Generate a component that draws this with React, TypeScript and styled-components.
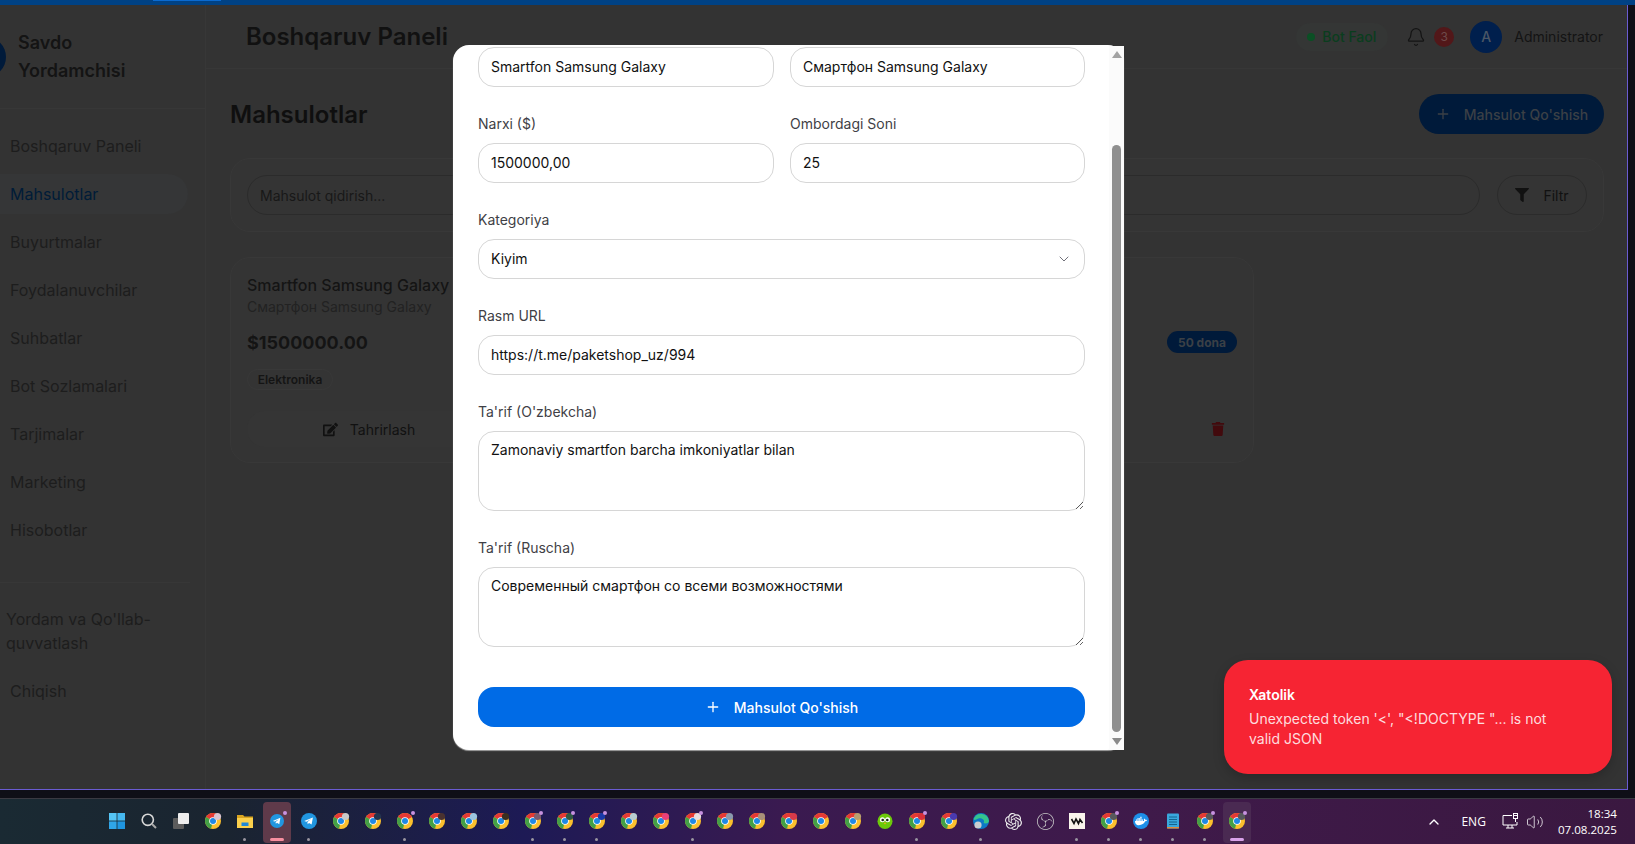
import type { ReactNode } from 'react';
import styled, { createGlobalStyle } from 'styled-components';
import { Bell, ChevronDown, ChevronUp, Plus, Volume2 } from 'lucide-react';
import { FaDocker, FaEdit, FaFilter, FaTrash } from 'react-icons/fa';
import { SiObsstudio, SiOpenai } from 'react-icons/si';

const GlobalStyle = createGlobalStyle`
  html, body {
    margin: 0;
    padding: 0;
    height: 100%;
    overflow: hidden;
    background: #0f0f17;
  }
  * {
    box-sizing: border-box;
  }
`;

const Screen = styled.div`
  width: 1635px;
  height: 844px;
  display: flex;
  flex-direction: column;
  font-family: 'Inter', 'Liberation Sans', sans-serif;
  overflow: hidden;
`;

const TopLine = styled.div`
  height: 5px;
  flex: none;
  background: #004285;
`;

const TopProgress = styled.div`
  width: 68px;
  height: 1px;
  margin-left: 153px;
  background: #0a6ad0;
`;

const AppWindow = styled.div`
  position: relative;
  width: 1628px;
  height: 785px;
  flex: none;
  display: flex;
  background: #333333;
  border-right: 1px solid #6a5bd2;
  border-bottom: 1px solid #6a5bd2;
`;

const Strip = styled.div`
  height: 8px;
  flex: none;
  background: #0f0f17;
`;

/* sidebar */

const Sidebar = styled.aside`
  width: 206px;
  flex: none;
  border-right: 1px solid #373737;
  overflow: hidden;
`;

const Brand = styled.div`
  height: 104px;
  display: flex;
  align-items: center;
  gap: 12px;
  margin-left: -34px;
  padding-top: 1px;
  border-bottom: 1px solid #373737;
`;

const BrandDot = styled.div`
  width: 40px;
  height: 40px;
  flex: none;
  border-radius: 50%;
  background: #001a3a;
`;

const BrandName = styled.div`
  width: 130px;
  font-size: 18px;
  font-weight: 600;
  line-height: 28px;
  color: #141414;
`;

const NavList = styled.nav`
  display: flex;
  flex-direction: column;
  gap: 8px;
  padding: 17px 17px 32px 0;
`;

const NavItem = styled.div<{ $active?: boolean }>`
  height: 40px;
  display: flex;
  align-items: center;
  padding-left: 10px;
  font-size: 16px;
  color: ${props => (props.$active ? '#001c38' : '#1d1d1d')};
  background: ${props => (props.$active ? '#353637' : 'transparent')};
  border-radius: 0 20px 20px 0;
`;

const NavFooter = styled.div`
  margin-right: 15px;
  padding-top: 16px;
  border-top: 1px solid #373737;
  display: flex;
  flex-direction: column;
  gap: 12px;
`;

const HelpItem = styled.div`
  padding: 8px 0 4px 6px;
  font-size: 16px;
  line-height: 24px;
  color: #1d1d1d;
`;

/* main */

const Main = styled.main`
  flex: 1;
  min-width: 0;
  display: flex;
  flex-direction: column;
`;

const Header = styled.header`
  height: 64px;
  flex: none;
  display: flex;
  align-items: center;
  justify-content: space-between;
  padding: 0 23px 0 40px;
  border-bottom: 1px solid #373737;
`;

const HeaderTitle = styled.h1`
  margin: 0;
  font-size: 24px;
  font-weight: 600;
  color: #111111;
`;

const HeaderRight = styled.div`
  display: flex;
  align-items: center;
`;

const BotStatus = styled.div`
  width: 92px;
  height: 28px;
  display: flex;
  align-items: center;
  gap: 7px;
  padding-left: 11px;
  margin-right: 18px;
  border-radius: 14px;
  background: #343635;
  font-size: 14px;
  font-weight: 500;
  color: #0a3d1e;
`;

const StatusDot = styled.span`
  width: 8px;
  height: 8px;
  border-radius: 50%;
  background: #0a4f24;
`;

const BellWrap = styled.div`
  display: flex;
  color: #141414;
  margin-right: 8px;
`;

const CountBadge = styled.div`
  width: 20px;
  height: 20px;
  display: flex;
  align-items: center;
  justify-content: center;
  border-radius: 50%;
  background: #521719;
  font-size: 12px;
  color: #6e4a4a;
  margin-right: 16px;
`;

const Avatar = styled.div`
  width: 32px;
  height: 32px;
  display: flex;
  align-items: center;
  justify-content: center;
  border-radius: 50%;
  background: #001f4d;
  font-size: 14px;
  font-weight: 500;
  color: #4a5666;
  margin-right: 12px;
`;

const UserName = styled.div`
  font-size: 14px;
  color: #141414;
  margin-right: 1px;
`;

const Content = styled.div`
  flex: 1;
  padding: 25px 23px 0 24px;
`;

const TitleRow = styled.div`
  display: flex;
  align-items: center;
  justify-content: space-between;
  margin-bottom: 24px;
`;

const PageTitle = styled.h2`
  margin: 0;
  font-size: 24px;
  font-weight: 600;
  color: #0f0f0f;
`;

const AddButton = styled.div`
  width: 185px;
  height: 40px;
  display: flex;
  align-items: center;
  justify-content: center;
  gap: 13px;
  border-radius: 20px;
  background: #001a3a;
  font-size: 14px;
  font-weight: 500;
  color: #3b4046;
`;

const SearchPanel = styled.div`
  height: 74px;
  display: flex;
  align-items: center;
  gap: 17px;
  padding: 0 16px 0 16px;
  border: 1px solid #383838;
  border-radius: 20px;
  background: #343434;
  margin-bottom: 25px;
`;

const SearchBox = styled.div`
  flex: 1;
  height: 40px;
  display: flex;
  align-items: center;
  padding-left: 12px;
  border: 1px solid #2b2b2b;
  border-radius: 20px;
  font-size: 14px;
  color: #181818;
`;

const FilterButton = styled.div`
  width: 90px;
  height: 40px;
  display: flex;
  align-items: center;
  justify-content: center;
  gap: 14px;
  border: 1px solid #2b2b2b;
  border-radius: 20px;
  font-size: 14px;
  color: #111111;
`;

const ProductCard = styled.div`
  width: 1024px;
  height: 206px;
  padding: 15px 16px;
  border: 1px solid #383838;
  border-radius: 20px;
  background: #343434;
`;

const ProductName = styled.div`
  font-size: 16px;
  font-weight: 500;
  line-height: 24px;
  color: #141414;
`;

const ProductSub = styled.div`
  font-size: 14px;
  line-height: 20px;
  color: #222222;
  margin-bottom: 13px;
`;

const PriceRow = styled.div`
  display: flex;
  align-items: center;
  justify-content: space-between;
  height: 24px;
  margin-bottom: 15px;
`;

const Price = styled.div`
  font-size: 18px;
  font-weight: 700;
  color: #141414;
`;

const StockBadge = styled.div`
  width: 70px;
  height: 22px;
  display: flex;
  align-items: center;
  justify-content: center;
  border-radius: 11px;
  background: #001a3a;
  font-size: 12px;
  font-weight: 700;
  color: #3b4046;
`;

const CategoryChip = styled.div`
  width: 86px;
  height: 21px;
  display: flex;
  align-items: center;
  justify-content: center;
  border: 1px solid #383838;
  border-radius: 11px;
  font-size: 12px;
  font-weight: 600;
  color: #141414;
  margin-bottom: 21px;
`;

const ActionRow = styled.div`
  display: flex;
  justify-content: space-between;
`;

const EditButton = styled.div`
  width: 244px;
  height: 36px;
  display: flex;
  align-items: center;
  justify-content: center;
  gap: 12px;
  border-radius: 18px;
  background: #353535;
  font-size: 14px;
  color: #111111;
`;

const DeleteButton = styled.div`
  width: 38px;
  height: 36px;
  display: flex;
  align-items: center;
  justify-content: center;
  color: #420a0d;
`;

/* modal */

const Modal = styled.div`
  position: absolute;
  top: 40px;
  left: 453px;
  width: 671px;
  height: 705px;
  padding: 2px 39px 0 25px;
  background: #ffffff;
  border-radius: 16px;
  box-shadow: 0 1px 1px #a0a0a0;
`;

const ScrollRail = styled.div`
  position: absolute;
  top: 1px;
  right: 0;
  bottom: 0;
  width: 15px;
  background: #fbfbfb;
  display: flex;
  flex-direction: column;
  align-items: center;
  padding: 5px 0 5px;
`;

const RailArrow = styled.div<{ $down?: boolean }>`
  width: 0;
  height: 0;
  flex: none;
  border-left: 5px solid transparent;
  border-right: 5px solid transparent;
  border-bottom: ${props => (props.$down ? 'none' : '7px solid #a3a3a3')};
  border-top: ${props => (props.$down ? '7px solid #8a8a8a' : 'none')};
`;

const RailThumb = styled.div`
  width: 9px;
  flex: 1;
  margin: 87px 0 6px;
  border-radius: 5px;
  background: #8f8f8f;
`;

const FormStack = styled.form`
  display: flex;
  flex-direction: column;
  gap: 27px;
`;

const TwoColumns = styled.div`
  display: grid;
  grid-template-columns: 296px 295px;
  gap: 16px;
`;

const Field = styled.div`
  display: flex;
  flex-direction: column;
  min-width: 0;
`;

const FieldLabel = styled.label`
  font-size: 14px;
  line-height: 20px;
  color: #3f3f46;
  margin-bottom: 9px;
`;

const TextInput = styled.input`
  width: 100%;
  height: 40px;
  padding: 0 12px 2px;
  border: 1px solid #d6d6d6;
  border-radius: 16px;
  outline: none;
  background: #ffffff;
  font-family: inherit;
  font-size: 14px;
  color: #111111;
`;

const SelectWrap = styled.div`
  position: relative;
`;

const SelectInput = styled.select`
  width: 100%;
  height: 40px;
  padding: 0 12px 2px;
  border: 1px solid #d6d6d6;
  border-radius: 16px;
  outline: none;
  appearance: none;
  background: #ffffff;
  font-family: inherit;
  font-size: 14px;
  color: #111111;
`;

const SelectChevron = styled.span`
  position: absolute;
  top: 12px;
  right: 13px;
  display: flex;
  color: #71717a;
  pointer-events: none;
`;

const TextArea = styled.textarea`
  display: block;
  width: 100%;
  height: 80px;
  padding: 8px 12px;
  border: 1px solid #d6d6d6;
  border-radius: 16px;
  outline: none;
  background: #ffffff;
  font-family: inherit;
  font-size: 14px;
  line-height: 20px;
  color: #111111;
`;

const SubmitButton = styled.button`
  width: 100%;
  height: 40px;
  margin-top: 13px;
  display: flex;
  align-items: center;
  justify-content: center;
  gap: 13px;
  border: none;
  border-radius: 16px;
  background: #006be6;
  font-family: inherit;
  font-size: 14px;
  font-weight: 500;
  color: #ffffff;
`;

/* toast */

const Toast = styled.div`
  position: absolute;
  left: 1224px;
  bottom: 15px;
  width: 388px;
  height: 114px;
  padding: 25px 50px 0 25px;
  border-radius: 24px;
  background: #f62433;
  box-shadow: 0 4px 12px rgba(0, 0, 0, 0.2);
`;

const ToastTitle = styled.div`
  font-size: 14px;
  font-weight: 600;
  line-height: 20px;
  color: #ffffff;
`;

const ToastText = styled.div`
  margin-top: 4px;
  font-size: 14px;
  line-height: 20px;
  color: rgba(255, 255, 255, 0.85);
`;

/* windows taskbar */

const Taskbar = styled.div`
  height: 46px;
  flex: none;
  display: flex;
  align-items: stretch;
  padding-left: 101px;
  border-top: 1px solid #3a3a42;
  background: linear-gradient(90deg, #1a2a33 0%, #1a2430 14%, #1d1a55 32%, #3a1a50 48%, #3f1a4a 70%, #3a1840 100%);
`;

const TaskSlot = styled.div<{ $active?: string; $notify?: boolean }>`
  position: relative;
  width: 32px;
  flex: none;
  display: flex;
  align-items: center;
  justify-content: center;
  padding-bottom: 1px;

  &::before {
    content: '';
    display: ${props => (props.$active ? 'block' : 'none')};
    position: absolute;
    top: 3px;
    bottom: 1px;
    left: 2px;
    right: 2px;
    border-radius: 4px;
    background: ${props => props.$active};
  }

  &::after {
    content: '';
    display: ${props => (props.$notify ? 'block' : 'none')};
    position: absolute;
    top: 12px;
    left: 22px;
    width: 4px;
    height: 4px;
    border-radius: 50%;
    background: #c792e0;
  }

  & > svg {
    position: relative;
  }
`;

const RunDot = styled.span`
  position: absolute;
  left: 14px;
  bottom: 3px;
  width: 3px;
  height: 3px;
  border-radius: 50%;
  background: #9a96a0;
`;

const RunBar = styled.span<{ $color: string }>`
  position: absolute;
  left: 9px;
  bottom: 3px;
  width: 14px;
  height: 3px;
  border-radius: 2px;
  background: ${props => props.$color};
`;

const ChromeSvg = styled.svg`
  overflow: visible;
`;

const DockerBadge = styled.span`
  display: flex;
  padding: 2px;
  border-radius: 50%;
  background: #1d8fe8;
`;

const Tray = styled.div`
  margin-left: auto;
  display: flex;
  align-items: center;
  color: #ffffff;
  padding-right: 18px;
`;

const TrayCaret = styled.span`
  display: flex;
  margin-right: 19px;
`;

const TrayLang = styled.span`
  font-family: 'Open Sans', 'Noto Sans', sans-serif;
  font-size: 12px;
  margin-right: 16px;
`;

const TrayIcons = styled.span`
  display: flex;
  align-items: center;
  gap: 7px;
  margin-right: 14px;
`;

const TrayClock = styled.div`
  font-family: 'Open Sans', 'Noto Sans', sans-serif;
  font-size: 11.6px;
  line-height: 16px;
  text-align: right;
`;

function ChromeIcon({ badge }: { badge?: string }) {
  return (
    <ChromeSvg width="16" height="16" viewBox="0 0 16 16">
      <circle cx="8" cy="8" r="8" fill="#fbc02d" />
      <path d="M8 8 L1.07 4 A8 8 0 0 1 14.93 4 Z" fill="#e53935" />
      <path d="M8 8 L1.07 4 A8 8 0 0 0 6 15.75 Z" fill="#43a047" />
      <circle cx="8" cy="8" r="3.8" fill="#ffffff" />
      <circle cx="8" cy="8" r="3" fill="#1e88e5" />
      {badge && <circle cx="12.5" cy="3.5" r="3.6" fill={badge} />}
    </ChromeSvg>
  );
}

function StartIcon() {
  return (
    <svg width="16" height="16" viewBox="0 0 16 16">
      <rect x="0" y="0" width="7.6" height="7.6" fill="#55c5f5" />
      <rect x="8.4" y="0" width="7.6" height="7.6" fill="#45b8f0" />
      <rect x="0" y="8.4" width="7.6" height="7.6" fill="#2fa5e8" />
      <rect x="8.4" y="8.4" width="7.6" height="7.6" fill="#1f95df" />
    </svg>
  );
}

function SearchIcon() {
  return (
    <svg width="16" height="16" viewBox="0 0 16 16" fill="none" stroke="#d8d8d8" strokeWidth="1.6">
      <circle cx="6.8" cy="6.8" r="5.6" />
      <path d="M11 11 L15 15" strokeWidth="2" stroke="#a8a8a8" />
    </svg>
  );
}

function TaskViewIcon() {
  return (
    <svg width="16" height="16" viewBox="0 0 16 16">
      <rect x="0" y="5" width="11" height="11" rx="1" fill="#5c5c5c" />
      <rect x="5" y="0" width="11" height="11" rx="1" fill="#eeeeee" />
    </svg>
  );
}

function FolderIcon() {
  return (
    <svg width="16" height="16" viewBox="0 0 16 16">
      <path d="M0 2 H6 L7.5 3.5 H16 V15 H0 Z" fill="#d9a520" />
      <rect x="0" y="5" width="16" height="10" fill="#fbd04c" />
      <rect x="4.5" y="9.5" width="7" height="3.5" fill="#1e88d8" />
    </svg>
  );
}

function TelegramIcon({ size = 16 }: { size?: number }) {
  return (
    <svg width={size} height={size} viewBox="0 0 16 16">
      <circle cx="8" cy="8" r="8" fill="#2196e0" />
      <path d="M3.2 7.9 L11.9 4.4 L10.6 11.6 L8 9.9 L6.7 11.2 L6.4 9.1 L10.2 5.9 L5.4 8.7 Z" fill="#ffffff" />
    </svg>
  );
}

function OwlIcon() {
  return (
    <svg width="16" height="16" viewBox="0 0 16 16">
      <ellipse cx="8" cy="8.3" rx="7.5" ry="7.7" fill="#6cc90a" />
      <circle cx="5.4" cy="6.8" r="2.5" fill="#ffffff" />
      <circle cx="10.6" cy="6.8" r="2.5" fill="#ffffff" />
      <circle cx="5.7" cy="7" r="1.3" fill="#1c2a12" />
      <circle cx="10.3" cy="7" r="1.3" fill="#1c2a12" />
      <path d="M6.6 9.8 H9.4 L8 11.6 Z" fill="#f5a623" />
    </svg>
  );
}

function EdgeIcon() {
  return (
    <svg width="16" height="16" viewBox="0 0 16 16">
      <circle cx="8" cy="8" r="8" fill="#0c78c6" />
      <path d="M0.6 6 A8 8 0 0 1 16 8 C16 10.5 12 11 10.5 10 C12.5 7.5 9 4.5 5.5 5.5 C3 6.2 1.5 8 0.6 6 Z" fill="#35c48d" />
      <circle cx="5" cy="12" r="3.6" fill="#c9ced2" />
    </svg>
  );
}

function WaveIcon() {
  return (
    <svg width="16" height="16" viewBox="0 0 16 16">
      <rect width="16" height="16" fill="#faf5ec" />
      <path d="M2.5 6 L5 10.5 L7 6 L9.5 10.5 L11 6.5 L13.5 10" fill="none" stroke="#111111" strokeWidth="1.6" />
    </svg>
  );
}

function NotepadIcon() {
  return (
    <svg width="16" height="16" viewBox="0 0 16 16">
      <rect x="2" y="0.5" width="12" height="15" rx="1" fill="#3aa7dc" />
      <rect x="2" y="14" width="12" height="1.5" fill="#e08a3c" />
      <path d="M4 4 H12 M4 6.5 H12 M4 9 H12 M4 11.5 H12" stroke="#0e5d86" strokeWidth="0.9" />
    </svg>
  );
}

function NetworkIcon() {
  return (
    <svg width="17" height="17" viewBox="0 0 17 17" fill="none" stroke="#ffffff" strokeWidth="1">
      <path d="M10 2.5 H1 V12 H15 V9" />
      <path d="M6 12 V15 M10 12 V15 M4 15 H12" />
      <rect x="11.5" y="0.5" width="4" height="5" />
      <path d="M13.5 5.5 V9 M11.5 2.5 H15.5" />
    </svg>
  );
}

type TaskItem = {
  icon: ReactNode;
  notify?: boolean;
  running?: boolean;
  active?: string;
  bar?: string;
};

const chrome = (badge?: string, notify?: boolean, running?: boolean): TaskItem => ({
  icon: <ChromeIcon badge={badge} />,
  notify,
  running,
});

const taskItems: TaskItem[] = [
  { icon: <StartIcon /> },
  { icon: <SearchIcon /> },
  { icon: <TaskViewIcon /> },
  chrome('#d9c4d0'),
  { icon: <FolderIcon />, running: true },
  { icon: <TelegramIcon size={14} />, notify: true, active: '#5f3a4a', bar: '#f78fa0' },
  { icon: <TelegramIcon />, running: true },
  chrome('#c9c9c9'),
  chrome('#23344f'),
  chrome(undefined, true, true),
  chrome('#4a3230'),
  chrome('#9cc4de'),
  chrome('#3b2f20'),
  chrome('#7a5a70', true, true),
  chrome('#2f5a42', true, true),
  chrome('#1a3aa8', true, true),
  chrome('#b8cdd0'),
  chrome('#e8407a'),
  chrome('#e8dede', true, true),
  chrome('#8a9aac'),
  chrome('#a89078'),
  chrome('#d83a4a'),
  chrome(),
  chrome('#b8a070'),
  { icon: <OwlIcon /> },
  chrome('#d8303a', true, true),
  chrome('#4a3ab0'),
  { icon: <EdgeIcon />, running: true },
  { icon: <SiOpenai size={17} color="#eeeeee" /> },
  { icon: <SiObsstudio size={17} color="#c8c8c8" /> },
  { icon: <WaveIcon />, running: true },
  chrome('#57595c', true, true),
  { icon: <DockerBadge><FaDocker size={12} color="#ffffff" /></DockerBadge>, running: true },
  { icon: <NotepadIcon />, running: true },
  chrome('#57595c', true, true),
  { icon: <ChromeIcon badge="#57595c" />, notify: true, active: '#4a2a52', bar: '#d9a3ea' },
];

const navItems = [
  'Boshqaruv Paneli',
  'Mahsulotlar',
  'Buyurtmalar',
  'Foydalanuvchilar',
  'Suhbatlar',
  'Bot Sozlamalari',
  'Tarjimalar',
  'Marketing',
  'Hisobotlar',
];

export default function App() {
  return (
    <Screen>
      <GlobalStyle />
      <TopLine>
        <TopProgress />
      </TopLine>

      <AppWindow>
        <Sidebar>
          <Brand>
            <BrandDot />
            <BrandName>Savdo Yordamchisi</BrandName>
          </Brand>
          <NavList>
            {navItems.map(item => (
              <NavItem key={item} $active={item === 'Mahsulotlar'}>
                {item}
              </NavItem>
            ))}
          </NavList>
          <NavFooter>
            <HelpItem>Yordam va Qo'llab-quvvatlash</HelpItem>
            <NavItem>Chiqish</NavItem>
          </NavFooter>
        </Sidebar>

        <Main>
          <Header>
            <HeaderTitle>Boshqaruv Paneli</HeaderTitle>
            <HeaderRight>
              <BotStatus>
                <StatusDot />
                Bot Faol
              </BotStatus>
              <BellWrap>
                <Bell size={20} strokeWidth={1.5} />
              </BellWrap>
              <CountBadge>3</CountBadge>
              <Avatar>A</Avatar>
              <UserName>Administrator</UserName>
            </HeaderRight>
          </Header>

          <Content>
            <TitleRow>
              <PageTitle>Mahsulotlar</PageTitle>
              <AddButton>
                <Plus size={16} />
                Mahsulot Qo'shish
              </AddButton>
            </TitleRow>

            <SearchPanel>
              <SearchBox>Mahsulot qidirish...</SearchBox>
              <FilterButton>
                <FaFilter size={14} />
                Filtr
              </FilterButton>
            </SearchPanel>

            <ProductCard>
              <ProductName>Smartfon Samsung Galaxy</ProductName>
              <ProductSub>Смартфон Samsung Galaxy</ProductSub>
              <PriceRow>
                <Price>$1500000.00</Price>
                <StockBadge>50 dona</StockBadge>
              </PriceRow>
              <CategoryChip>Elektronika</CategoryChip>
              <ActionRow>
                <EditButton>
                  <FaEdit size={15} />
                  Tahrirlash
                </EditButton>
                <DeleteButton>
                  <FaTrash size={14} />
                </DeleteButton>
              </ActionRow>
            </ProductCard>
          </Content>
        </Main>

        <Modal>
          <FormStack>
            <TwoColumns>
              <TextInput defaultValue="Smartfon Samsung Galaxy" />
              <TextInput defaultValue="Смартфон Samsung Galaxy" />
            </TwoColumns>
            <TwoColumns>
              <Field>
                <FieldLabel>Narxi ($)</FieldLabel>
                <TextInput defaultValue="1500000,00" />
              </Field>
              <Field>
                <FieldLabel>Ombordagi Soni</FieldLabel>
                <TextInput defaultValue="25" />
              </Field>
            </TwoColumns>
            <Field>
              <FieldLabel>Kategoriya</FieldLabel>
              <SelectWrap>
                <SelectInput defaultValue="Kiyim">
                  <option>Elektronika</option>
                  <option>Kiyim</option>
                </SelectInput>
                <SelectChevron>
                  <ChevronDown size={16} strokeWidth={1.5} />
                </SelectChevron>
              </SelectWrap>
            </Field>
            <Field>
              <FieldLabel>Rasm URL</FieldLabel>
              <TextInput defaultValue="https://t.me/paketshop_uz/994" />
            </Field>
            <Field>
              <FieldLabel>Ta'rif (O'zbekcha)</FieldLabel>
              <TextArea defaultValue="Zamonaviy smartfon barcha imkoniyatlar bilan" />
            </Field>
            <Field>
              <FieldLabel>Ta'rif (Ruscha)</FieldLabel>
              <TextArea defaultValue="Современный смартфон со всеми возможностями" />
            </Field>
            <SubmitButton type="button">
              <Plus size={16} />
              Mahsulot Qo'shish
            </SubmitButton>
          </FormStack>
          <ScrollRail>
            <RailArrow />
            <RailThumb />
            <RailArrow $down />
          </ScrollRail>
        </Modal>

        <Toast>
          <ToastTitle>Xatolik</ToastTitle>
          <ToastText>Unexpected token '&lt;', "&lt;!DOCTYPE "... is not valid JSON</ToastText>
        </Toast>
      </AppWindow>

      <Strip />

      <Taskbar>
        {taskItems.map((item, index) => (
          <TaskSlot key={index} $active={item.active} $notify={item.notify}>
            {item.icon}
            {item.running && <RunDot />}
            {item.bar && <RunBar $color={item.bar} />}
          </TaskSlot>
        ))}
        <Tray>
          <TrayCaret>
            <ChevronUp size={16} />
          </TrayCaret>
          <TrayLang>ENG</TrayLang>
          <TrayIcons>
            <NetworkIcon />
            <Volume2 size={18} strokeWidth={1} />
          </TrayIcons>
          <TrayClock>
            18:34
            <br />
            07.08.2025
          </TrayClock>
        </Tray>
      </Taskbar>
    </Screen>
  );
}
